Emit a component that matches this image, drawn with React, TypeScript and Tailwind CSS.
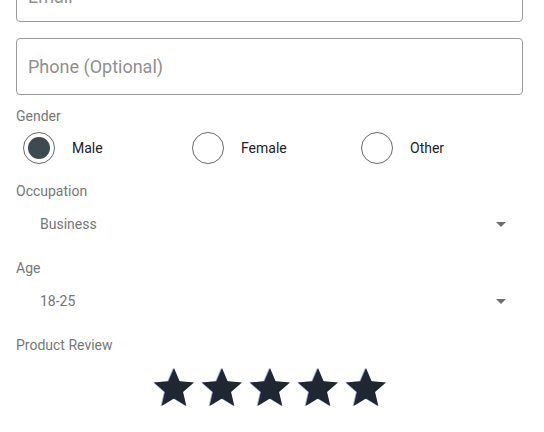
import { useState } from 'react';

const font = { fontFamily: 'Roboto, "Noto Sans", sans-serif' };

function Field({ label, className = '' }: { label: string; className?: string }) {
  return (
    <div className="h-[57px] w-full rounded border border-[#9a9a9a] flex items-center px-[11px]">
      <span className={`text-[18px] text-[#8f8f8f] ${className}`}>{label}</span>
    </div>
  );
}

function Label({ children, className = '' }: { children: string; className?: string }) {
  return <div className={`h-5 leading-5 text-[14px] text-[#777777] ${className}`}>{children}</div>;
}

function Radio({ label, checked, onClick }: { label: string; checked: boolean; onClick: () => void }) {
  return (
    <button className="flex items-center h-10 text-left" onClick={onClick}>
      <span className="ml-[7px] w-8 h-8 rounded-full border-[1.5px] border-[#666b6e] flex items-center justify-center">
        {checked && <span className="w-[22px] h-[22px] rounded-full bg-[#3d4a51]" />}
      </span>
      <span className="ml-[17px] text-[14px] text-[#222222]">{label}</span>
    </button>
  );
}

function Select({ value }: { value: string }) {
  return (
    <div className="h-10 flex items-center justify-between pl-6 pr-[17px]">
      <span className="text-[14px] text-[#767676]">{value}</span>
      <svg width="10" height="5" viewBox="0 0 10 5">
        <path d="M0 0h10L5 5z" fill="#6f6f6f" />
      </svg>
    </div>
  );
}

function Star() {
  return (
    <svg width="48" height="48" viewBox="0 0 24 24" className="drop-shadow-[-0.5px_0.5px_0_rgba(70,90,220,0.55)]">
      <path
        d="M12 17.27L18.18 21l-1.64-7.03L22 9.24l-7.19-.61L12 2 9.19 8.63 2 9.24l5.46 4.73L5.82 21z"
        fill="#1f2730"
      />
    </svg>
  );
}

export default function App() {
  const [gender, setGender] = useState('Male');

  return (
    <div className="w-[544px] h-[432px] overflow-hidden bg-white" style={font}>
      <div className="-mt-[35px] pl-4 pr-[21px]">
        <Field label="Email" className="mt-[5px]" />
        <div className="mt-4">
          <Field label="Phone (Optional)" />
        </div>

        <Label className="mt-[11px]">Gender</Label>
        <div className="mt-[2px] grid grid-cols-3">
          {['Male', 'Female', 'Other'].map((g) => (
            <Radio key={g} label={g} checked={gender === g} onClick={() => setGender(g)} />
          ))}
        </div>

        <Label className="mt-[13px]">Occupation</Label>
        <div className="mt-[3px]">
          <Select value="Business" />
        </div>

        <Label className="mt-[14px]">Age</Label>
        <div className="mt-[3px]">
          <Select value="18-25" />
        </div>

        <Label className="mt-[14px]">Product Review</Label>
        <div className="mt-[9px] flex justify-center">
          {[0, 1, 2, 3, 4].map((i) => (
            <Star key={i} />
          ))}
        </div>
      </div>
    </div>
  );
}
